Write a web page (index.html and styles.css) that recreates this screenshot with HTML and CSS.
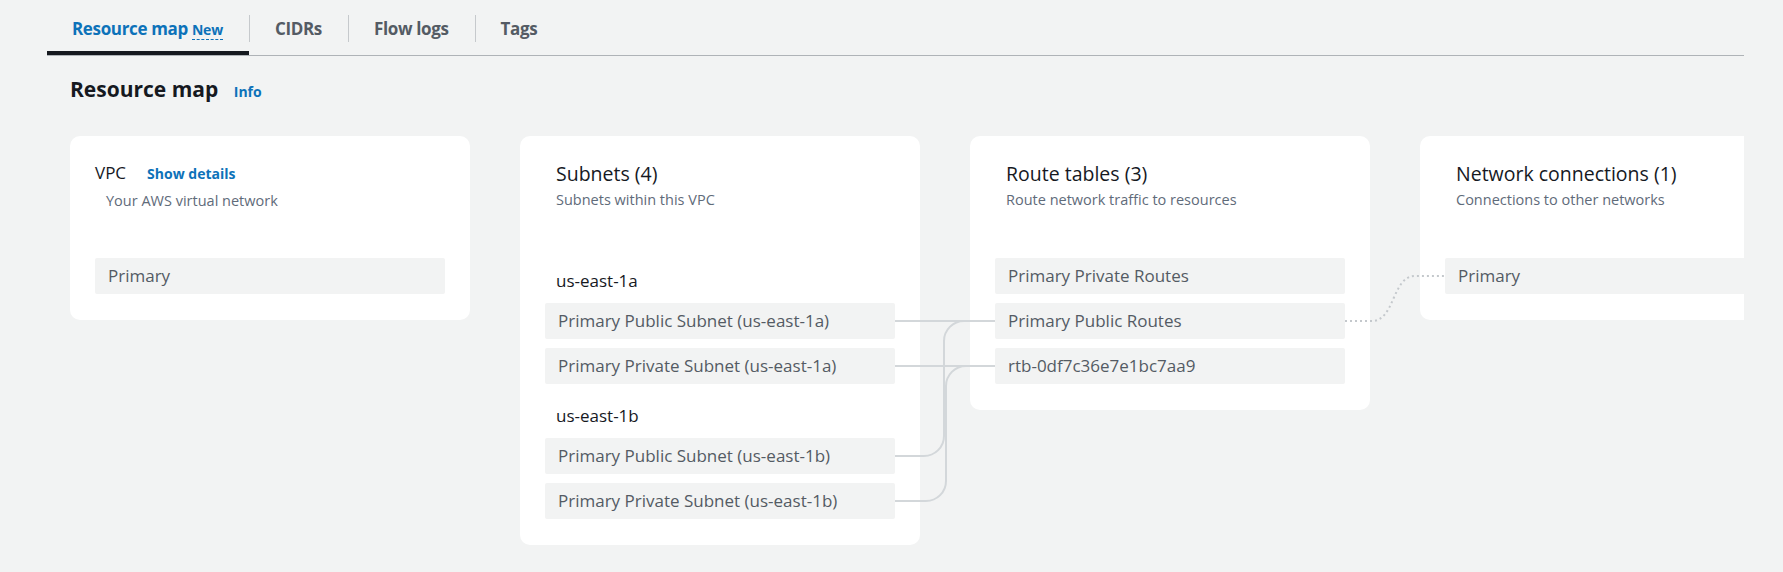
FILE: index.html
```html
<!DOCTYPE html>
<html lang="en">
<head>
<meta charset="utf-8">
<title>Resource map</title>
<link rel="stylesheet" href="styles.css">
</head>
<body>
<div class="page">
  <nav class="tabs">
    <div class="tab active"><span class="tab-label">Resource map <span class="new">New</span></span></div>
    <div class="tab"><span class="tab-label">CIDRs</span></div>
    <div class="tab"><span class="tab-label">Flow logs</span></div>
    <div class="tab"><span class="tab-label">Tags</span></div>
  </nav>
  <main class="content">
    <h2 class="heading">Resource map <a class="info">Info</a></h2>
    <div class="map">
      <svg class="connectors" xmlns="http://www.w3.org/2000/svg">
        <g fill="none" stroke="#d3d7da" stroke-width="2">
          <path d="M825,185 H925"/>
          <path d="M825,230 H925"/>
          <path d="M825,320 H854 A20,20 0 0 0 874,300 V205 A20,20 0 0 1 894,185 H925"/>
          <path d="M825,365 H856 A20,20 0 0 0 876,345 V250 A20,20 0 0 1 896,230 H925"/>
        </g>
        <path d="M1275,185 H1302 C1325,185 1322,140 1345,140 H1375" fill="none" stroke="#c4c8cc" stroke-width="2" stroke-dasharray="2 3"/>
      </svg>

      <section class="card card-vpc">
        <div class="vpc-title"><span class="title-sm">VPC</span><a class="link">Show details</a></div>
        <div class="subtitle vpc-sub">Your AWS virtual network</div>
        <div class="nodes nodes-vpc">
          <div class="node">Primary</div>
        </div>
      </section>

      <section class="card">
        <div class="card-title">Subnets (4)</div>
        <div class="subtitle">Subnets within this VPC</div>
        <div class="group group-first">
          <div class="group-label">us-east-1a</div>
          <div class="nodes">
            <div class="node">Primary Public Subnet (us-east-1a)</div>
            <div class="node">Primary Private Subnet (us-east-1a)</div>
          </div>
        </div>
        <div class="group group-next">
          <div class="group-label">us-east-1b</div>
          <div class="nodes">
            <div class="node">Primary Public Subnet (us-east-1b)</div>
            <div class="node">Primary Private Subnet (us-east-1b)</div>
          </div>
        </div>
      </section>

      <section class="card">
        <div class="card-title">Route tables (3)</div>
        <div class="subtitle">Route network traffic to resources</div>
        <div class="nodes nodes-top">
          <div class="node">Primary Private Routes</div>
          <div class="node">Primary Public Routes</div>
          <div class="node">rtb-0df7c36e7e1bc7aa9</div>
        </div>
      </section>

      <section class="card">
        <div class="card-title">Network connections (1)</div>
        <div class="subtitle">Connections to other networks</div>
        <div class="nodes nodes-top">
          <div class="node">Primary</div>
        </div>
      </section>
    </div>
  </main>
</div>
</body>
</html>
```
FILE: styles.css
```css
html, body {
  margin: 0;
  padding: 0;
  background: #f2f3f3;
}

body {
  font-family: "Open Sans", "Noto Sans", sans-serif;
  color: #16191f;
  min-height: 100vh;
}

.page {
  padding: 0 39px 0 47px;
}

/* Tabs */
.tabs {
  display: flex;
  border-bottom: 1px solid #afb3b7;
}

.tab {
  position: relative;
  height: 55px;
  padding-top: 15px;
  box-sizing: border-box;
}

.tab-label {
  display: block;
  padding: 0 26px 0 25px;
  line-height: 27px;
  font-size: 17px;
  font-weight: 700;
  letter-spacing: -0.35px;
  color: #545b64;
}

.tab + .tab .tab-label {
  border-left: 1px solid #c6c9cc;
}

.tab.active .tab-label {
  color: #0d72b9;
}

.tab.active::after {
  content: "";
  position: absolute;
  left: 0;
  right: 0;
  bottom: 0;
  height: 4px;
  background: #16191f;
}

.new {
  font-size: 14px;
  letter-spacing: -0.2px;
  line-height: 1;
  border-bottom: 1px dashed #0d72b9;
}

/* Content */
.content {
  padding-left: 23px;
}

.heading {
  margin: 19px 0 33px;
  font-size: 21px;
  line-height: 28px;
  height: 28px;
  font-weight: 700;
  color: #16191f;
}

.info {
  margin-left: 10px;
  font-size: 14px;
  line-height: 1;
  font-weight: 700;
  color: #0d72b9;
}

/* Map */
.map {
  position: relative;
  display: flex;
  align-items: flex-start;
  gap: 50px;
  overflow: hidden;
}

.connectors {
  position: absolute;
  left: 0;
  top: 0;
  width: 100%;
  height: 100%;
  overflow: visible;
  pointer-events: none;
  z-index: 1;
}

.card {
  flex: 0 0 400px;
  box-sizing: border-box;
  background: #ffffff;
  border-radius: 10px;
  padding: 26px 25px 26px;
}

.vpc-title {
  display: flex;
  align-items: baseline;
  height: 22px;
  line-height: 22px;
}

.title-sm {
  font-size: 17px;
  color: #16191f;
}

.link {
  margin-left: 21px;
  font-size: 14px;
  font-weight: 700;
  color: #0d72b9;
}

.card-title {
  font-size: 19.5px;
  line-height: 24px;
  padding-left: 11px;
  color: #16191f;
}

.subtitle {
  margin-top: 4px;
  padding-left: 11px;
  font-size: 14.5px;
  line-height: 20px;
  color: #5f6b7a;
}

.vpc-sub {
  margin-top: 7px;
}

.nodes {
  display: flex;
  flex-direction: column;
  gap: 9px;
}

.nodes-top {
  margin-top: 48px;
}

.nodes-vpc {
  margin-top: 47px;
}

.node {
  height: 36px;
  line-height: 36px;
  padding-left: 13px;
  background: #f2f3f3;
  border-radius: 2px;
  font-size: 17px;
  color: #545b64;
  white-space: nowrap;
}

.group-first {
  margin-top: 60px;
}

.group-next {
  margin-top: 21px;
}

.group-label {
  font-size: 17px;
  line-height: 22px;
  padding-left: 11px;
  margin-bottom: 11px;
  color: #16191f;
}
```
